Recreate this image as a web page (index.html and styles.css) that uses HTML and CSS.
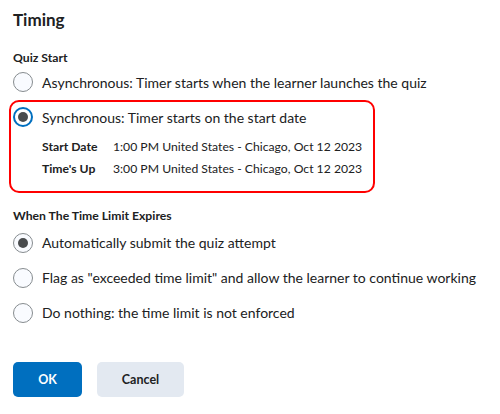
FILE: index.html
```html
<!DOCTYPE html>
<html lang="en">
  <head>
    <meta charset="UTF-8" />
    <title>Timing</title>
    <link rel="stylesheet" href="styles.css">
  </head>
  <body>
    <div class="dialog">
      <h1>Timing</h1>

      <div class="group-label">Quiz Start</div>
      <div class="option">
        <span class="radio"></span>
        <span>Asynchronous: Timer starts when the learner launches the quiz</span>
      </div>
      <div class="highlight">
        <div class="option">
          <span class="radio checked focus"></span>
          <span>Synchronous: Timer starts on the start date</span>
        </div>
        <div class="details">
          <div class="detail-row"><span class="detail-label">Start Date</span><span>1:00 PM United States - Chicago, Oct 12 2023</span></div>
          <div class="detail-row"><span class="detail-label">Time's Up</span><span>3:00 PM United States - Chicago, Oct 12 2023</span></div>
        </div>
      </div>

      <div class="group-label second">When The Time Limit Expires</div>
      <div class="option spaced">
        <span class="radio checked"></span>
        <span>Automatically submit the quiz attempt</span>
      </div>
      <div class="option spaced">
        <span class="radio"></span>
        <span>Flag as "exceeded time limit" and allow the learner to continue working</span>
      </div>
      <div class="option spaced">
        <span class="radio"></span>
        <span>Do nothing: the time limit is not enforced</span>
      </div>

      <div class="buttons">
        <button class="btn primary">OK</button>
        <button class="btn">Cancel</button>
      </div>
    </div>
  </body>
</html>
```
FILE: styles.css
```css
body {
  margin: 0;
  background: #fff;
  color: #202122;
  font-family: Lato, "Open Sans", sans-serif;
}
.dialog {
  padding: 6px 13px;
}
h1 {
  margin: 0;
  font-size: 17px;
  line-height: 28px;
  font-weight: 700;
}
.group-label {
  margin-top: 14px;
  font-size: 12.2px;
  font-weight: 700;
  line-height: 20px;
}
.group-label.second {
  margin-top: 14px;
  line-height: 18px;
}
.option {
  display: flex;
  align-items: center;
  gap: 9px;
  height: 28px;
  font-size: 14px;
  white-space: nowrap;
}
.option.spaced {
  height: 35px;
}
.radio {
  box-sizing: border-box;
  width: 20px;
  height: 20px;
  flex: none;
  border: 1px solid #868c8f;
  border-radius: 50%;
  background: #f9fbff;
  display: flex;
  align-items: center;
  justify-content: center;
}
.radio.checked::after {
  content: "";
  width: 10px;
  height: 10px;
  border-radius: 50%;
  background: #494c4e;
}
.radio.focus {
  border: 2px solid #006fbf;
  background: #fff;
}
.highlight {
  box-sizing: border-box;
  width: 366px;
  margin: 4px 0 0 -4px;
  padding: 1px 6px 11px 2px;
  border: 2px solid #f00;
  border-radius: 10px;
}
.details {
  margin-left: 29px;
  padding-top: 5px;
  font-size: 12.2px;
}
.detail-row {
  display: flex;
  line-height: 22px;
  white-space: nowrap;
}
.detail-label {
  width: 71px;
  flex: none;
  font-weight: 700;
}
.buttons {
  display: flex;
  gap: 15px;
  margin-top: 32px;
}
.btn {
  height: 35px;
  width: 69px;
  padding: 0;
  border: none;
  border-radius: 5px;
  background: #e3e9f1;
  color: #202122;
  font-family: Lato, sans-serif;
  font-size: 12.5px;
  font-weight: 700;
}
.btn.primary {
  background: #006fbf;
  color: #fff;
}
.btn + .btn {
  width: 87px;
}
```
